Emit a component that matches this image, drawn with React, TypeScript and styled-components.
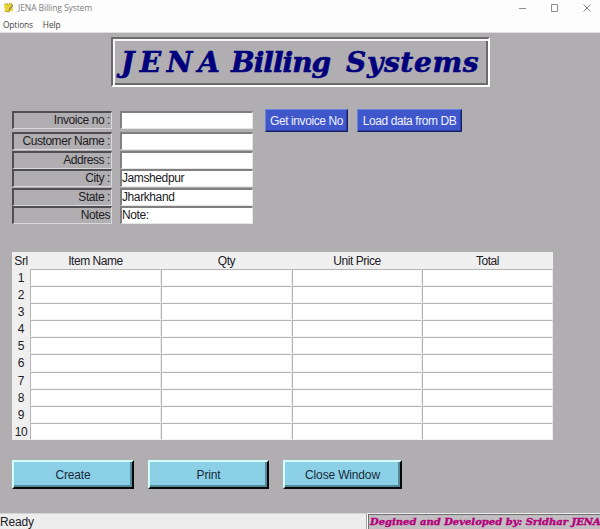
import React from "react";
import styled, { createGlobalStyle } from "styled-components";

const GlobalStyle = createGlobalStyle`
  * { box-sizing: border-box; }
  body { margin: 0; overflow: hidden; }
`;

const Window = styled.div`
  width: 600px;
  height: 529px;
  display: flex;
  flex-direction: column;
  background: #b0aeb0;
  color: #202024;
  font: 12px/14px "Liberation Sans", Arial, sans-serif;
  letter-spacing: -0.1px;
`;

const Chrome = styled.header`
  height: 33px;
  flex: none;
  background: #fefdfe;
  border-bottom: 1px solid #dedede;
  font-family: "Open Sans", "Segoe UI", sans-serif;
`;

const TitleBar = styled.div`
  display: flex;
  align-items: center;
  height: 15px;
  padding-left: 4px;
`;

const WindowTitle = styled.span`
  margin-left: 4px;
  flex: 1;
  font-size: 8.6px;
  letter-spacing: -0.13px;
  color: #808080;
`;

const Controls = styled.div`
  display: flex;
  gap: 24px;
  margin-right: 9px;
`;

const MenuBar = styled.nav`
  display: flex;
  gap: 10px;
  padding: 3px 3px 0;
  font-size: 8.4px;
  line-height: 14px;
  letter-spacing: -0.15px;
  color: #454545;
`;

const Content = styled.main`
  flex: 1;
  padding: 4px 12px 0;
`;

const Banner = styled.h1`
  width: 379px;
  height: 50px;
  margin: 0 0 22px 99px;
  padding: 0 0 0 8px;
  display: flex;
  border: 2px solid;
  border-color: #6b6b6b #fff #fff #6b6b6b;
  box-shadow: inset 2px 2px #f6f6f6, inset -2px -2px #6b6b6b;
  color: #00007c;
  font: italic bold 28px/48px "DejaVu Serif", serif;
  -webkit-text-stroke: 0.6px #00007c;
`;

const BannerWord = styled.span<{ $width: number; $spacing: number }>`
  width: ${(p) => p.$width}px;
  flex: none;
  white-space: nowrap;
  letter-spacing: ${(p) => p.$spacing}px;
`;

const FormArea = styled.section`
  display: flex;
  height: 143px;
`;

const Fields = styled.div`
  display: grid;
  grid-template-columns: 100px 133px;
  grid-template-rows: 21px repeat(5, 18.6px);
  column-gap: 8px;
  align-content: start;
  padding-top: 2px;
`;

const Label = styled.label`
  height: 18px;
  border: 2px solid;
  border-width: 2px 1px 1px 2px;
  border-color: #4e4e50 #d8d8d8 #d8d8d8 #4e4e50;
  padding-right: 1px;
  text-align: right;
  line-height: 15px;
  letter-spacing: -0.43px;
`;

const Entry = styled.div`
  height: 18px;
  border: 2px solid;
  border-width: 2px 1px 1px 2px;
  border-color: #808080 #e6e6e6 #e6e6e6 #808080;
  background: #fff;
  line-height: 15px;
  letter-spacing: -0.4px;
`;

const BlueButtons = styled.div`
  display: flex;
  gap: 9px;
  margin-left: 12px;
`;

const BlueButton = styled.button<{ $width: number }>`
  width: ${(p) => p.$width}px;
  height: 23px;
  padding: 0;
  border: 1px solid;
  border-color: #6684e2 #15206a #15206a #6684e2;
  box-shadow: inset -1px -1px #2a3b9c;
  background: #4057cb;
  color: #edf1ff;
  font: inherit;
  letter-spacing: -0.42px;
  white-space: nowrap;
`;

const Table = styled.section`
  width: 541px;
  height: 188px;
  display: grid;
  grid-template-columns: 18px 131px 131px 130px 131px;
  grid-template-rows: 17px repeat(10, 17.1px);
  background: #f0eff0;
`;

const HeadCell = styled.div`
  text-align: center;
  line-height: 19px;
  letter-spacing: -0.45px;
`;

const Serial = styled.div`
  text-align: center;
  line-height: 19px;
  letter-spacing: -0.3px;
`;

const Cell = styled.div`
  background: #fefefe;
  border: 1px solid;
  border-color: #b4b4b4 #ececec #f4f4f4 #b4b4b4;
`;

const Actions = styled.div`
  display: flex;
  gap: 14px;
  margin-top: 20px;
`;

const ActionButton = styled.button<{ $width: number }>`
  width: ${(p) => p.$width}px;
  height: 29px;
  padding: 0;
  border: 2px solid;
  border-color: #d2ffff #050708 #050708 #d2ffff;
  box-shadow: inset -2px -2px #548999;
  background: #8bd0e7;
  color: #172b38;
  font: inherit;
  letter-spacing: -0.16px;
`;

const StatusBar = styled.footer`
  height: 16px;
  flex: none;
  display: flex;
`;

const StatusText = styled.div`
  width: 367px;
  background: #ededee;
  border-top: 1px solid #d4d4d5;
  border-right: 1px solid #a0a0a0;
  line-height: 16px;
  letter-spacing: -0.2px;
`;

const Credit = styled.div`
  flex: 1;
  min-width: 0;
  overflow: hidden;
  padding-left: 2px;
  border-left: 1px solid #fff;
  border-top: 1px solid #eee;
  box-shadow: inset 1px 1px #707070;
  background: #c1bfc1;
  color: #b4007c;
  white-space: nowrap;
  font: italic bold 10px/15px "DejaVu Serif", serif;
  letter-spacing: 0;
  -webkit-text-stroke: 0.4px #b4007c;
`;

const fields = [
  ["Invoice no :", ""],
  ["Customer Name :", ""],
  ["Address :", ""],
  ["City :", "Jamshedpur"],
  ["State :", "Jharkhand"],
  ["Notes", "Note:"],
];
const columns = ["Item Name", "Qty", "Unit Price", "Total"];

export default function App() {
  return (
    <Window>
      <GlobalStyle />
      <Chrome>
        <TitleBar>
          <svg width="10" height="11" viewBox="0 0 10 11">
            <path d="M0 2 8 1 9 9 1 10Z" fill="#e8d337" />
            <path d="M1 2h7" stroke="#928a55" strokeDasharray="1 1" />
            <path d="m5 8 4-5" stroke="#716f62" strokeWidth="1.2" />
            <path d="m1 9 3 1 2-1" stroke="#b79a24" fill="none" />
          </svg>
          <WindowTitle>JENA Billing System</WindowTitle>
          <Controls>
            <svg width="8" height="8" viewBox="0 0 8 8"><path d="M0 4.5h7" stroke="#8f8f8f" /></svg>
            <svg width="8" height="8" viewBox="0 0 8 8"><path d="M.5.5h6v7h-6z" fill="none" stroke="#8f8f8f" /></svg>
            <svg width="8" height="8" viewBox="0 0 8 8"><path d="m.5.5 7 7m0-7-7 7" stroke="#858585" /></svg>
          </Controls>
        </TitleBar>
        <MenuBar><span>Options</span><span>Help</span></MenuBar>
      </Chrome>
      <Content>
        <Banner>
          <BannerWord $width={110} $spacing={5.6}>JENA </BannerWord>
          <BannerWord $width={115} $spacing={-1}>Billing </BannerWord>
          <BannerWord $width={138} $spacing={0.7}>Systems</BannerWord>
        </Banner>
        <FormArea>
          <Fields>
            {fields.map(([label, value]) => (
              <React.Fragment key={label}>
                <Label>{label}</Label>
                <Entry>{value}</Entry>
              </React.Fragment>
            ))}
          </Fields>
          <BlueButtons>
            <BlueButton $width={83}>Get invoice No</BlueButton>
            <BlueButton $width={105}>Load data from DB</BlueButton>
          </BlueButtons>
        </FormArea>
        <Table>
          <HeadCell>Srl</HeadCell>
          {columns.map((name) => <HeadCell key={name}>{name}</HeadCell>)}
          {Array.from({ length: 10 }, (_, row) => (
            <React.Fragment key={row}>
              <Serial>{row + 1}</Serial>
              {columns.map((name) => <Cell key={name} />)}
            </React.Fragment>
          ))}
        </Table>
        <Actions>
          <ActionButton $width={122}>Create</ActionButton>
          <ActionButton $width={121}>Print</ActionButton>
          <ActionButton $width={119}>Close Window</ActionButton>
        </Actions>
      </Content>
      <StatusBar>
        <StatusText>Ready</StatusText>
        <Credit>Degined and Developed by: Sridhar JENA</Credit>
      </StatusBar>
    </Window>
  );
}
